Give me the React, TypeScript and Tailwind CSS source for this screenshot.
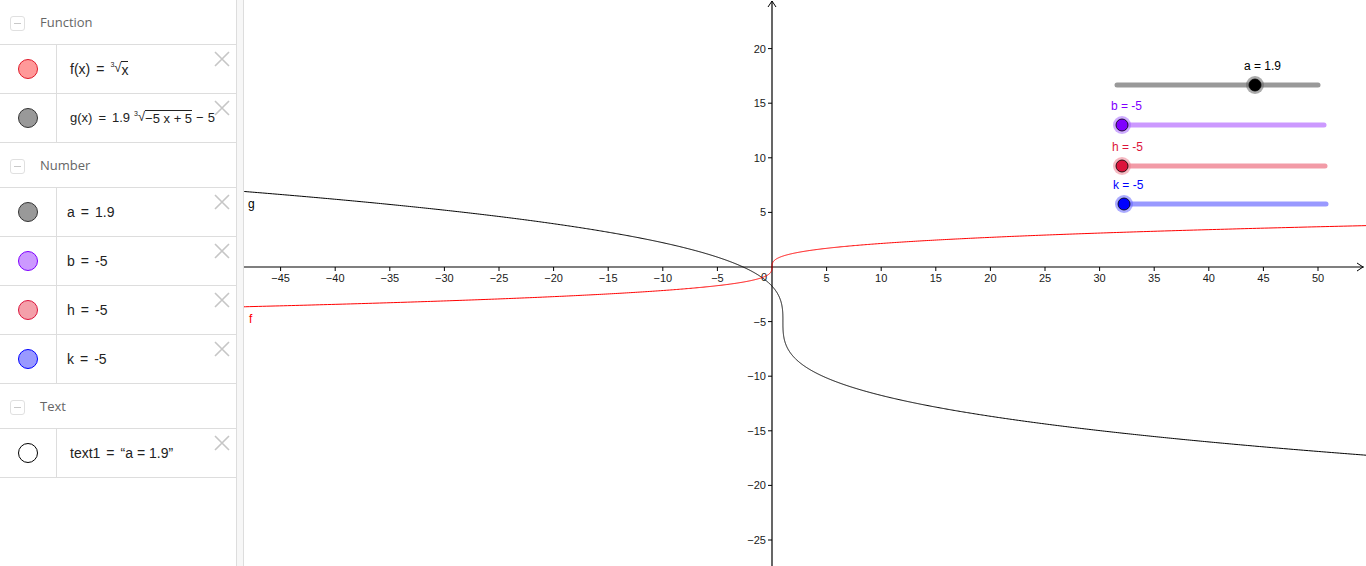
import React from "react";

const S = 10.92;
const OX = 528;
const OY = 267;
const W = 1122;
const H = 566;

const px = (x: number) => OX + x * S;
const py = (y: number) => OY - y * S;

function curve(from: number, to: number, fn: (u: number) => [number, number]) {
  const pts: string[] = [];
  for (let u = from; u <= to; u += 0.01) {
    const [x, y] = fn(u);
    pts.push(`${px(x).toFixed(2)},${py(y).toFixed(2)}`);
  }
  return "M" + pts.join("L");
}

const fPath = curve(-3.8, 3.9, (u) => [u * u * u, u]);
const gPath = curve(-6.6, 6.4, (u) => [(5 - u * u * u) / 5, 1.9 * u - 5]);

const xTicks: number[] = [];
for (let k = -45; k <= 50; k += 5) if (k !== 0) xTicks.push(k);
const yTicks: number[] = [];
for (let k = -25; k <= 20; k += 5) if (k !== 0) yTicks.push(k);

const fmt = (n: number) => (n < 0 ? `\u2212${-n}` : `${n}`);

const CloseIcon = () => (
  <svg width="16" height="16" viewBox="0 0 16 16" className="block">
    <path d="M1 1L15 15M15 1L1 15" stroke="#c6c6c6" strokeWidth="1.6" />
  </svg>
);

const SectionHeader = ({ title }: { title: string }) => (
  <div className="flex items-center h-[45px] border-b border-[#dddddd] pl-[10px] pt-[2px] gap-[15px]">
    <div className="w-[15px] h-[15px] rounded-[3px] border border-[#e0e0e0] flex items-center justify-center">
      <div className="w-[7px] h-[1px] bg-[#c8c8c8]" />
    </div>
    <span className="text-[13px] text-[#666666]" style={{ fontFamily: '"Open Sans", sans-serif' }}>
      {title}
    </span>
  </div>
);

const ItemRow = ({ dot, children }: { dot: string; children: React.ReactNode }) => (
  <div className="flex h-[49px] border-b border-[#dddddd]">
    <div className="w-[57px] shrink-0 border-r border-[#dddddd] flex items-center justify-center">
      <div className={`w-[20px] h-[20px] rounded-full border ${dot}`} />
    </div>
    <div
      className="flex-1 min-w-0 flex items-center pl-[10px] text-[14px] text-[#222222] whitespace-nowrap overflow-hidden"
      style={{ fontFamily: '"Liberation Sans", Arial, sans-serif' }}
    >
      {children}
    </div>
    <div className="shrink-0 pt-[6px] pr-[6px] -ml-[22px] relative">
      <CloseIcon />
    </div>
  </div>
);

const Eq = () => <span className="px-[6px]">=</span>;

const Root3 = ({ children }: { children: React.ReactNode }) => (
  <span className="inline-flex items-start">
    <span className="text-[7px] leading-none">3</span>
    <span className="text-[13px] leading-none">√</span>
    <span className="border-t border-[#222222] leading-[14px] pt-[1px]">{children}</span>
  </span>
);

const Slider = ({
  x1,
  x2,
  y,
  pos,
  label,
  lx,
  track,
  fill,
  halo,
  labelColor,
}: {
  x1: number;
  x2: number;
  y: number;
  pos: number;
  label: string;
  lx: number;
  track: string;
  fill: string;
  halo: string;
  labelColor: string;
}) => (
  <g>
    <line x1={x1} y1={y} x2={x2} y2={y} stroke={track} strokeWidth="5" strokeLinecap="round" />
    <circle cx={pos} cy={y} r="9" fill={halo} opacity="0.55" />
    <circle cx={pos} cy={y} r="6" fill={fill} stroke="#000" strokeWidth="0.8" />
    <text x={lx} y={y - 15} fontSize="12" fill={labelColor} fontFamily="Liberation Sans, Arial, sans-serif">
      {label}
    </text>
  </g>
);

const Graph = () => (
  <svg width={W} height={H} viewBox={`0 0 ${W} ${H}`} className="block">
    <rect width={W} height={H} fill="#ffffff" />
    {/* axes */}
    <line x1="0" y1={OY} x2={W - 2} y2={OY} stroke="#000" strokeWidth="1.2" />
    <line x1={OX} y1="1" x2={OX} y2={H} stroke="#000" strokeWidth="1.2" />
    <path d={`M${W - 9} ${OY - 4}L${W - 3} ${OY}L${W - 9} ${OY + 4}`} stroke="#000" fill="none" strokeWidth="1" />
    <path d={`M${OX - 4} 7L${OX} 1L${OX + 4} 7`} stroke="#000" fill="none" strokeWidth="1" />
    <g fontSize="11" fontFamily="Liberation Sans, Arial, sans-serif" fill="#1a1a1a">
      {xTicks.map((k) => (
        <g key={`x${k}`}>
          <line x1={px(k)} y1={OY} x2={px(k)} y2={OY + 4} stroke="#000" />
          <text x={px(k)} y={OY + 15} textAnchor="middle">
            {fmt(k)}
          </text>
        </g>
      ))}
      {yTicks.map((k) => (
        <g key={`y${k}`}>
          <line x1={OX - 4} y1={py(k)} x2={OX} y2={py(k)} stroke="#000" />
          <text x={OX - 6} y={py(k) + 4} textAnchor="end">
            {fmt(k)}
          </text>
        </g>
      ))}
      <text x={OX - 5} y={OY + 14} textAnchor="end">
        0
      </text>
    </g>
    {/* curves */}
    <path d={gPath} stroke="#000" strokeWidth="1" fill="none" />
    <path d={fPath} stroke="#ff0000" strokeWidth="1" fill="none" />
    <text x="4" y="208" fontSize="12" fontFamily="Liberation Sans, Arial, sans-serif" fill="#000">
      g
    </text>
    <text x="5" y="323" fontSize="12" fontFamily="Liberation Sans, Arial, sans-serif" fill="#ff0000">
      f
    </text>
    {/* sliders */}
    <Slider x1={873} x2={1074} y={85} pos={1011} label="a = 1.9" lx={1000} track="#999999" fill="#000000" halo="#666666" labelColor="#000000" />
    <Slider x1={878} x2={1080} y={125} pos={878} label="b = -5" lx={867} track="#cc99ff" fill="#7f00ff" halo="#a566ff" labelColor="#7f00ff" />
    <Slider x1={878} x2={1081} y={166} pos={878} label="h = -5" lx={868} track="#f29ba7" fill="#dc143c" halo="#ee8090" labelColor="#dc143c" />
    <Slider x1={880} x2={1082} y={204} pos={880} label="k = -5" lx={869} track="#9999ff" fill="#0000ff" halo="#6666ff" labelColor="#0000ff" />
  </svg>
);

export default function App() {
  return (
    <div className="w-[1366px] h-[566px] flex bg-white overflow-hidden">
      <div className="w-[236px] shrink-0 flex flex-col">
        <SectionHeader title="Function" />
        <ItemRow dot="bg-[#ff9999] border-[#e01a2a]">
          <span className="text-[14px] pl-[3px] flex items-center">
            <span>f(x)</span>
            <Eq />
            <Root3>x</Root3>
          </span>
        </ItemRow>
        <ItemRow dot="bg-[#999999] border-[#333333]">
          <span className="text-[13px] pl-[3px] flex items-center">
            <span>g(x)</span>
            <Eq />
            <span className="pr-[4px]">1.9</span>
            <Root3>−5 x + 5</Root3>
            <span className="px-[4px]">−</span>
            <span>5</span>
          </span>
        </ItemRow>
        <SectionHeader title="Number" />
        <ItemRow dot="bg-[#999999] border-[#333333]">
          a<Eq />1.9
        </ItemRow>
        <ItemRow dot="bg-[#cc99ff] border-[#7f00ff]">
          b<Eq />-5
        </ItemRow>
        <ItemRow dot="bg-[#f4a0aa] border-[#dc143c]">
          h<Eq />-5
        </ItemRow>
        <ItemRow dot="bg-[#9999ff] border-[#0000ff]">
          k<Eq />-5
        </ItemRow>
        <SectionHeader title="Text" />
        <ItemRow dot="bg-white border-[#000000]">
          <span className="text-[14px] pl-[3px]">
            text1<Eq />“a = 1.9”
          </span>
        </ItemRow>
      </div>
      <div className="w-[8px] shrink-0 bg-[#f7f7f7] border-x border-[#dddddd]" />
      <div className="flex-1 min-w-0">
        <Graph />
      </div>
    </div>
  );
}
